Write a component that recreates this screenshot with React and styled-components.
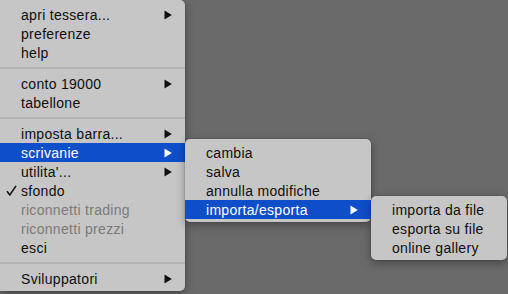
import React from "react";
import styled, { createGlobalStyle } from "styled-components";

const GlobalStyle = createGlobalStyle`
  html, body {
    margin: 0;
    padding: 0;
    background: #6a6a6a;
    overflow: hidden;
  }
  body {
    font-family: "Liberation Sans", Arial, sans-serif;
  }
`;

const mainItems = [
  { label: "apri tessera...", sub: true },
  { label: "preferenze" },
  { label: "help" },
  { sep: true },
  { label: "conto 19000", sub: true },
  { label: "tabellone" },
  { sep: true },
  { label: "imposta barra...", sub: true },
  { label: "scrivanie", sub: true, open: "desks" },
  { label: "utilita'...", sub: true },
  { label: "sfondo", checked: true },
  { label: "riconnetti trading", disabled: true },
  { label: "riconnetti prezzi", disabled: true },
  { label: "esci" },
  { sep: true },
  { label: "Sviluppatori", sub: true },
];

const deskItems = [
  { label: "cambia" },
  { label: "salva" },
  { label: "annulla modifiche" },
  { label: "importa/esporta", sub: true, open: "io" },
];

const ioItems = [
  { label: "importa da file" },
  { label: "esporta su file" },
  { label: "online gallery" },
];

const menus = { desks: { items: deskItems, width: 186 }, io: { items: ioItems, width: 136 } };

const Arrow = ({ light }) => (
  <svg width="8" height="10" viewBox="0 0 8 10">
    <path d="M0.5 0.5 L7.8 5 L0.5 9.5 Z" fill={light ? "#fff" : "#111"} />
  </svg>
);

const Check = () => (
  <svg width="11" height="11" viewBox="0 0 11 11">
    <path d="M1 6.2 L3.8 10 L10 0.8" fill="none" stroke="#111" strokeWidth="1.5" />
  </svg>
);

const Menu = ({ items, width, root }) => (
  <Panel $width={width} $root={root}>
    {items.map((it, i) =>
      it.sep ? (
        <Separator key={i} />
      ) : (
        <Item key={i} $active={!!it.open} $disabled={it.disabled}>
          {it.checked && (
            <Mark>
              <Check />
            </Mark>
          )}
          <Label>{it.label}</Label>
          {it.sub && (
            <ArrowBox>
              <Arrow light={!!it.open} />
            </ArrowBox>
          )}
          {it.open && <Menu {...menus[it.open]} />}
        </Item>
      )
    )}
  </Panel>
);

export default function App() {
  return (
    <>
      <GlobalStyle />
      <Desktop>
        <Menu items={mainItems} width={185} root />
      </Desktop>
    </>
  );
}

const Desktop = styled.div`
  width: 508px;
  height: 294px;
`;

const Panel = styled.div`
  position: ${(p) => (p.$root ? "relative" : "absolute")};
  top: ${(p) => (p.$root ? "0" : "-4px")};
  left: ${(p) => (p.$root ? "0" : "100%")};
  width: ${(p) => p.$width}px;
  box-sizing: border-box;
  padding: ${(p) => (p.$root ? "5px 0 3px" : "4px 0 3px")};
  background: #c6c6c6;
  border-radius: ${(p) => (p.$root ? "0 5px 5px 0" : "5px")};
  box-shadow: 0 3px 10px rgba(0, 0, 0, 0.35), 0 0 0 0.5px rgba(0, 0, 0, 0.15);
  z-index: ${(p) => (p.$root ? 1 : 2)};
`;

const Item = styled.div`
  position: relative;
  display: flex;
  align-items: center;
  height: 19px;
  padding: 0 13px 0 21px;
  font-size: 14px;
  letter-spacing: 0.3px;
  white-space: nowrap;
  color: ${(p) => (p.$active ? "#fff" : p.$disabled ? "#7a7a7a" : "#0f0f0f")};
  background: ${(p) => (p.$active ? "#0f4ec9" : "transparent")};
`;

const Label = styled.span`
  flex: 1;
`;

const Mark = styled.span`
  position: absolute;
  left: 6px;
  top: 4px;
  display: flex;
`;

const ArrowBox = styled.span`
  display: flex;
  align-items: center;
`;

const Separator = styled.div`
  height: 2px;
  margin: 5px 0;
  background: #b3b3b3;
`;
